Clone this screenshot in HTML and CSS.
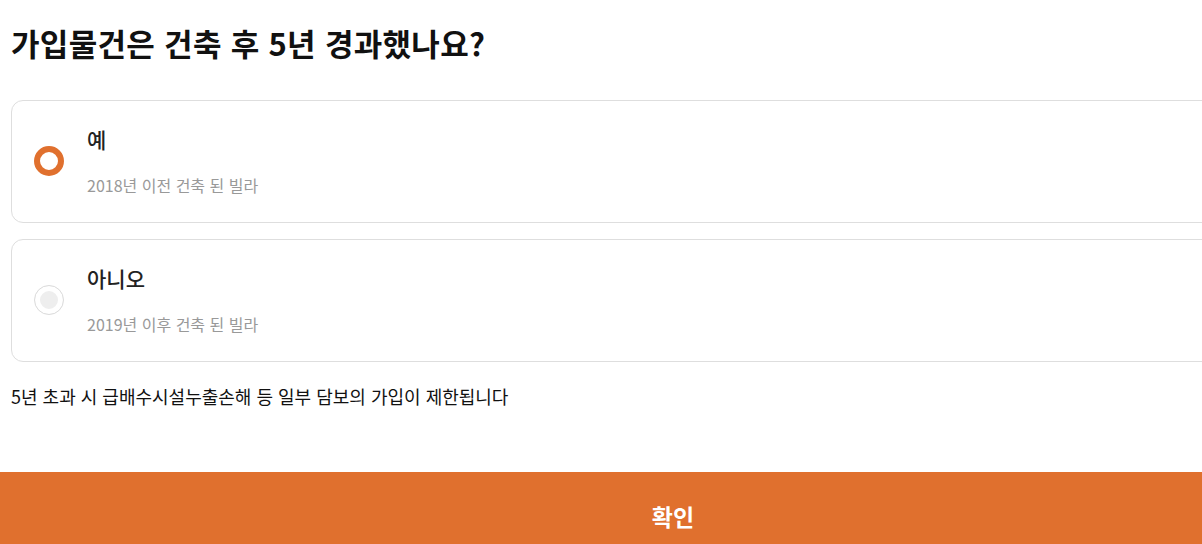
FILE: index.html
```html
<!DOCTYPE html>
<html lang="ko">
<head>
<meta charset="utf-8">
<link rel="stylesheet" href="styles.css">
</head>
<body>
<div class="page">
  <h1 class="title">가입물건은 건축 후 5년 경과했나요?</h1>
  <div class="options">
    <label class="option">
      <span class="radio radio-on"></span>
      <span class="texts">
        <span class="label">예</span>
        <span class="desc">2018년 이전 건축 된 빌라</span>
      </span>
    </label>
    <label class="option">
      <span class="radio"></span>
      <span class="texts">
        <span class="label">아니오</span>
        <span class="desc">2019년 이후 건축 된 빌라</span>
      </span>
    </label>
  </div>
  <p class="note">5년 초과 시 급배수시설누출손해 등 일부 담보의 가입이 제한됩니다</p>
</div>
<button class="confirm">확인</button>
</body>
</html>
```
FILE: styles.css
```css
html, body {
  margin: 0;
  padding: 0;
  overflow: hidden;
  background: #fff;
}
body {
  width: 1346px;
  font-family: "Noto Sans CJK KR", "Noto Sans", sans-serif;
  color: #222;
}
.page {
  padding: 23px 11px 0;
}
.title {
  margin: 0 0 37px;
  font-size: 31px;
  line-height: 40px;
  font-weight: 700;
  color: #111;
  letter-spacing: 0.3px;
}
.options {
  display: flex;
  flex-direction: column;
  gap: 16px;
}
.option {
  display: flex;
  align-items: center;
  gap: 23px;
  border: 1px solid #dedede;
  border-radius: 12px;
  padding: 24px 22px 25px;
}
.radio {
  width: 30px;
  height: 30px;
  box-sizing: border-box;
  border-radius: 50%;
  border: 1px solid #dcdcdc;
  background: #eee;
  box-shadow: inset 0 0 0 5px #fff;
  flex: none;
}
.radio-on {
  border: 6px solid #e0702e;
  background: #fff;
  box-shadow: none;
}
.texts {
  display: flex;
  flex-direction: column;
  gap: 20px;
}
.label {
  font-size: 21px;
  line-height: 28px;
  font-weight: 500;
  color: #222;
}
.desc {
  font-size: 16px;
  line-height: 24px;
  color: #999;
}
.note {
  margin: 22px 0 0;
  font-size: 18px;
  line-height: 24px;
  color: #111;
}
.confirm {
  display: block;
  width: 1346px;
  height: 88px;
  margin-top: 64px;
  border: 0;
  background: #e0702e;
  color: #fff;
  font-family: "Noto Sans CJK KR", "Noto Sans", sans-serif;
  font-size: 23px;
  font-weight: 700;
}
```
